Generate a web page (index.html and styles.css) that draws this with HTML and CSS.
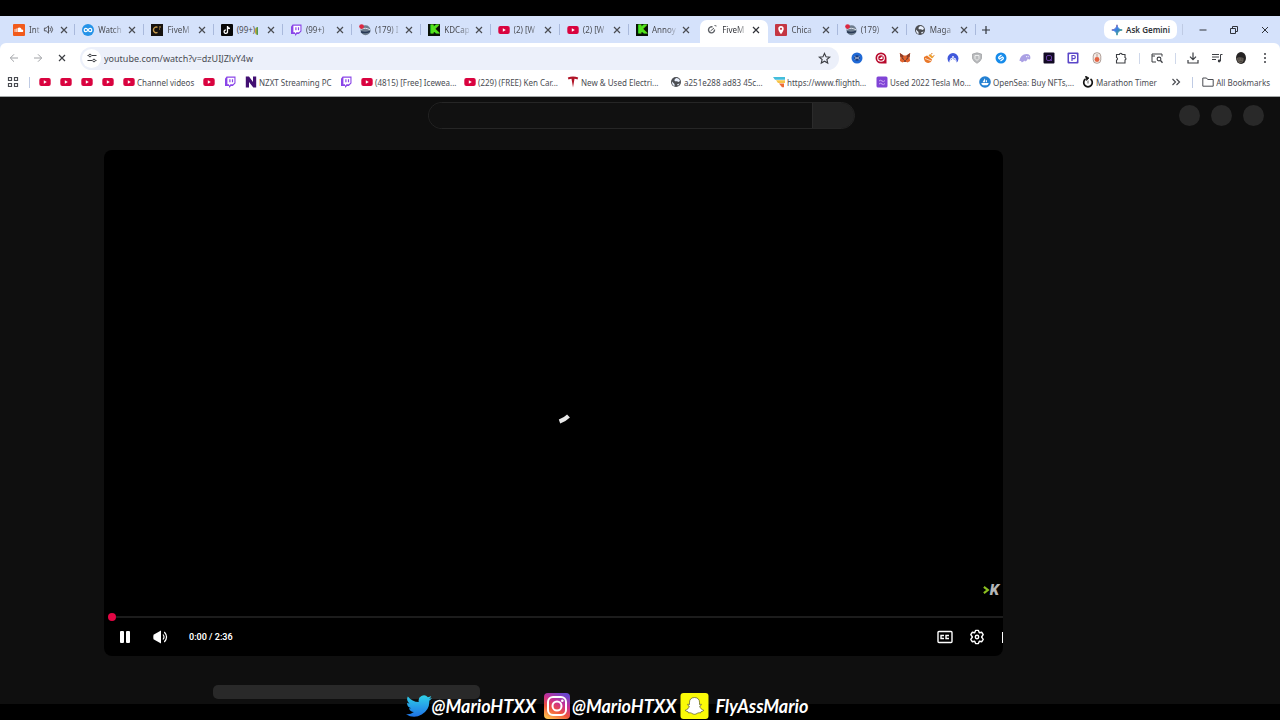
FILE: index.html
```html
<!DOCTYPE html>
<html lang="en">
<head>
<meta charset="utf-8">
<title>FiveM</title>
<link rel="stylesheet" href="styles.css">
</head>
<body>
<svg class="defs" aria-hidden="true">
  <defs>
    <linearGradient id="bird" x1="0" y1="0" x2="0" y2="1"><stop offset="0" stop-color="#2fd0e8"/><stop offset="1" stop-color="#1f74e8"/></linearGradient>
    <linearGradient id="insta" x1="0.2" y1="1" x2="0.7" y2="0"><stop offset="0" stop-color="#fdc04e"/><stop offset="0.35" stop-color="#f0543c"/><stop offset="0.65" stop-color="#c92f92"/><stop offset="1" stop-color="#6a45cf"/></linearGradient>
    <linearGradient id="spark" x1="0" y1="0" x2="1" y2="1"><stop offset="0" stop-color="#e8453c"/><stop offset="0.4" stop-color="#3b7ded"/><stop offset="1" stop-color="#35a853"/></linearGradient>
  </defs>
  <symbol id="x" viewBox="0 0 12 12"><path d="M3 3l6 6M9 3l-6 6" stroke="currentColor" stroke-width="1.2" fill="none"/></symbol>
  <symbol id="yt" viewBox="0 0 12 12"><rect x="0.3" y="2" width="11.4" height="8" rx="2" fill="#d9033f"/><path d="M4.8 4.2v3.6l3-1.8z" fill="#fff"/></symbol>
  <symbol id="twitch" viewBox="0 0 12 12"><path d="M2.6 .5h8.900v6.800L8.900 10H7L5 12V10H1V2.700z" fill="#8a45e8"/><path d="M3.400 1.700h7v5L8.900 8.300H6.500L5 9.700V8.300H3.400z" fill="#fff"/><path d="M5.900 3.300v3M8.500 3.300v3" stroke="#8a45e8" stroke-width="1.200"/></symbol>
  <symbol id="globe" viewBox="0 0 12 12"><circle cx="6" cy="6" r="5" fill="#4b4d52"/><path d="M2 5.500L4.500 8v2.200C2.800 9.500 1.900 8 2 5.500zM6 2c2.200 0 3.700 1.300 4 3L8.500 6 7 5.200H5L4.300 4zM9.700 7.500L8 9.800 7 8.200z" fill="#e8effc"/></symbol>
  <symbol id="gta" viewBox="0 0 12 12"><circle cx="6.500" cy="6.300" r="5" fill="#6d7c8d"/><path d="M2 5.300c3-1.500 6-1.300 9 .5" stroke="#dce1e9" fill="none"/><path d="M2 7.800c3 1.200 6 1 9-.4" stroke="#273855" stroke-width="1.500" fill="none"/><circle cx="2.600" cy="2.600" r="2.400" fill="#db2841"/></symbol>
</svg>

<header class="browser">
  <div class="tabstrip">
    <div class="tabs" role="tablist">
      <div class="tab"><svg viewBox="0 0 12 12"><rect width="12" height="12" rx="1" fill="#f15a1b"/><path d="M2 5v3M3.300 4.500V8" stroke="#fff" stroke-width=".8"/><path d="M4.500 8V4.200c2-1.400 3.900-.3 4 1.300C10.700 5.200 10.800 8 9.200 8z" fill="#fff"/></svg><span class="title short">Int</span><svg class="audio" viewBox="0 0 12 12"><path d="M1.500 4.500h2L6 2v8L3.500 7.500h-2z" fill="none" stroke="currentColor"/><path d="M7.500 4q1.700 2 0 4M9 2.500q3 3.500 0 7" fill="none" stroke="currentColor"/></svg><button class="close" aria-label="Close tab"><svg><use href="#x"/></svg></button></div>
      <div class="tab"><svg viewBox="0 0 12 12"><circle cx="6" cy="6" r="6" fill="#2593e8"/><path d="M6 6C4.700 3.500 2.200 4 2.200 6S4.700 8.500 6 6s3.800-2 3.800 0S7.300 8.500 6 6z" fill="none" stroke="#fff" stroke-width="1.200"/></svg><span class="title">Watch</span><button class="close" aria-label="Close tab"><svg><use href="#x"/></svg></button></div>
      <div class="tab"><svg viewBox="0 0 12 12"><rect width="12" height="12" fill="#17130f"/><path d="M6.500 3.400a2.800 2.800 0 1 0 0 5" fill="none" stroke="#c69a4c" stroke-width="1.400"/><path d="M8 3h2M8 5h1" stroke="#c69a4c"/></svg><span class="title">FiveM</span><button class="close" aria-label="Close tab"><svg><use href="#x"/></svg></button></div>
      <div class="tab"><svg viewBox="0 0 12 12"><rect width="12" height="12" rx="1" fill="#080808"/><path d="M6.500 2v5.500A1.700 1.700 0 1 1 4.800 6M6.500 2.500Q7 4.300 9 4.500" fill="none" stroke="#fff" stroke-width="1.300"/></svg><span class="title solid">(99+)<i class="rainbow"></i></span><button class="close" aria-label="Close tab"><svg><use href="#x"/></svg></button></div>
      <div class="tab"><svg><use href="#twitch"/></svg><span class="title">(99+)</span><button class="close" aria-label="Close tab"><svg><use href="#x"/></svg></button></div>
      <div class="tab"><svg><use href="#gta"/></svg><span class="title">(179) I</span><button class="close" aria-label="Close tab"><svg><use href="#x"/></svg></button></div>
      <div class="tab"><b class="kick">K</b><span class="title">KDCap</span><button class="close" aria-label="Close tab"><svg><use href="#x"/></svg></button></div>
      <div class="tab"><svg><use href="#yt"/></svg><span class="title">(2) [W</span><button class="close" aria-label="Close tab"><svg><use href="#x"/></svg></button></div>
      <div class="tab"><svg><use href="#yt"/></svg><span class="title">(2) [W</span><button class="close" aria-label="Close tab"><svg><use href="#x"/></svg></button></div>
      <div class="tab before-active"><b class="kick">K</b><span class="title">Annoy</span><button class="close" aria-label="Close tab"><svg><use href="#x"/></svg></button></div>
      <div class="tab active"><svg viewBox="0 0 12 12"><path d="M6.500 3a3 3 0 1 0 2 2.500" fill="none" stroke="#5b5e63" stroke-width="1.400"/><path d="M4.500 7L8 4M8.500 1.500l2 .5" stroke="#5b5e63"/></svg><span class="title">FiveM</span><button class="close" aria-label="Close tab"><svg><use href="#x"/></svg></button></div>
      <div class="tab"><svg viewBox="0 0 12 12"><rect width="12" height="12" rx="1" fill="#c43643"/><path d="M6 10.300C4 7.500 3.300 6.300 3.300 4.800a2.700 2.700 0 0 1 5.400 0C8.700 6.300 8 7.500 6 10.300z" fill="#fff"/><circle cx="6" cy="4.800" r="1.100" fill="#c43643"/></svg><span class="title">Chica</span><button class="close" aria-label="Close tab"><svg><use href="#x"/></svg></button></div>
      <div class="tab"><svg><use href="#gta"/></svg><span class="title">(179)</span><button class="close" aria-label="Close tab"><svg><use href="#x"/></svg></button></div>
      <div class="tab"><svg><use href="#globe"/></svg><span class="title">Maga</span><button class="close" aria-label="Close tab"><svg><use href="#x"/></svg></button></div>
    </div>
    <div class="strip-end">
      <button class="newtab" aria-label="New tab"><svg viewBox="0 0 12 12"><path d="M6 2v8M2 6h8" stroke="currentColor" stroke-width="1.200"/></svg></button>
      <button class="gemini"><svg viewBox="0 0 12 12"><path d="M6 .8Q6.500 5.500 11.200 6 6.500 6.500 6 11.200 5.500 6.500.8 6 5.500 5.500 6 .8z" fill="url(#spark)" stroke="url(#spark)"/></svg>Ask Gemini</button>
      <span class="rule"></span>
      <button class="win" aria-label="Minimize"><svg viewBox="0 0 12 12"><path d="M2.500 6h7" stroke="currentColor"/></svg></button>
      <button class="win" aria-label="Restore"><svg viewBox="0 0 12 12"><path d="M2.500 4.500h5v5h-5zM4.500 4V2.500h5v5H8" fill="none" stroke="currentColor"/></svg></button>
      <button class="win" aria-label="Close"><svg viewBox="0 0 12 12"><path d="M3 3l6 6M9 3l-6 6" stroke="currentColor"/></svg></button>
    </div>
  </div>

  <div class="toolbar">
    <button class="tool dim" aria-label="Back"><svg viewBox="0 0 12 12"><path d="M10 6H2.500M6 2.300L2.300 6 6 9.700" fill="none" stroke="currentColor"/></svg></button>
    <button class="tool dim" aria-label="Forward"><svg viewBox="0 0 12 12"><path d="M2 6h7.500M6 2.300L9.700 6 6 9.700" fill="none" stroke="currentColor"/></svg></button>
    <button class="tool" aria-label="Stop loading"><svg><use href="#x"/></svg></button>
    <div class="omnibox">
      <button class="site" aria-label="View site information"><svg viewBox="0 0 12 12"><path d="M1.500 3.500h1M6 3.500h4.500M1.500 8.500H6M9.500 8.500h1" stroke="currentColor" stroke-width="1.200"/><circle cx="4" cy="3.500" r="1.300" fill="none" stroke="currentColor"/><circle cx="8" cy="8.500" r="1.300" fill="none" stroke="currentColor"/></svg></button>
      <input class="url" type="text" aria-label="Address" value="youtube.com/watch?v=dzUIJZlvY4w">
      <button class="star" aria-label="Bookmark this tab"><svg viewBox="0 0 12 12"><path d="M6 1.300l1.400 3.100 3.400.3-2.600 2.200.8 3.300L6 8.500l-3 1.700.8-3.300L1.200 4.700l3.400-.3z" fill="none" stroke="currentColor"/></svg></button>
    </div>
    <div class="extensions">
      <button class="tool" aria-label="Crypto wallet"><svg viewBox="0 0 12 12"><circle cx="6" cy="6" r="5.500" fill="#2069d5"/><circle cx="6" cy="6" r="2.700" fill="#193d83"/><path d="M4 4.500L5.500 6 4 7.500M8 4.500L6.500 6 8 7.500" stroke="#fff" fill="none" stroke-width=".9"/></svg></button>
      <button class="tool" aria-label="Quidd"><svg viewBox="0 0 12 12"><path d="M6 .5a5.500 5.500 0 1 0 0 11h5.500V6A5.500 5.500 0 0 0 6 .5z" fill="#b8092c"/><circle cx="6" cy="6" r="3.300" fill="none" stroke="#fff" stroke-width="1.100"/><path d="M4 7l3.500-3v3" fill="#fff"/></svg></button>
      <button class="tool" aria-label="MetaMask"><svg viewBox="0 0 12 12"><path d="M.8 1l3.700 2.500h3L11.200 1l-.6 5 .5 3-2.500 1.500L7.500 10h-3l-1.100.5L.9 9l.5-3z" fill="#e2632d"/><path d="M.8 1l3.700 2.500L4 6 1.400 5zM11.200 1L7.500 3.500 8 6l2.600-1z" fill="#8d3e29"/><path d="M3.300 6.500l1.500.8M8.700 6.500l-1.500.8M5 9h2" stroke="#302a3a"/></svg></button>
      <button class="tool" aria-label="Compass"><svg viewBox="0 0 12 12"><path d="M1 5l3-1.500L9 7.500A4 4 0 0 1 2 9.500 5 5 0 0 1 1 5z" fill="#e9782a"/><path d="M2 6.500l6 2.300" stroke="#fff" stroke-width=".7"/><path d="M5.500 3.500l3.500 3 1.500-1.500L7 2z" fill="#eda02c"/><path d="M8.200 2.500l1-1.500M9.800 4.500l1.600-1" stroke="#d77123" fill="none"/></svg></button>
      <button class="tool" aria-label="NordVPN"><svg viewBox="0 0 12 12"><path d="M2.200 10.500A5.500 5.500 0 1 1 9.800 10.500L7.800 7 7 8 6 5.500 4.500 8 4 7z" fill="#4058db"/><path d="M2.500 9.500L4.200 6l.6.900L6 4l1.300 2.800L8 6l1.500 3.500" stroke="#fff" fill="none" stroke-width=".8"/></svg></button>
      <button class="tool" aria-label="Shield"><svg viewBox="0 0 12 12"><path d="M6 .8l4.500 1.300v4.400Q9.500 9.500 6 11.300 2.500 9.500 1.500 6.500V2.100z" fill="#b9bbbd" stroke="#999b9d" stroke-width=".7"/><path d="M4 3.500h4v3L6 8.500 4 6.500z" fill="none" stroke="#eee"/></svg></button>
      <button class="tool" aria-label="Shazam"><svg viewBox="0 0 12 12"><circle cx="6" cy="6" r="5.500" fill="#168bea"/><path d="M6.500 3L4.200 4.700Q3 6 4.500 7L6 6M5.500 9l2.300-1.700Q9 6 7.500 5L6 6" stroke="#fff" stroke-width="1.300" fill="none"/></svg></button>
      <button class="tool" aria-label="Phantom"><svg viewBox="0 0 12 12"><path d="M.5 9C1 5 3.500 2 7.500 2c3 0 4.300 2 3.800 4.500-.2 1.500-2 1-2.500 0C8 9 6 10.300 5.300 8.500 4 10.800 2 10.600 2.200 9z" fill="#aaa0e4"/><path d="M7.500 4v1.200M9.200 4v1.200" stroke="#fff" stroke-width=".8"/></svg></button>
      <button class="tool" aria-label="Quick search"><svg viewBox="0 0 12 12"><rect x=".5" y=".5" width="11" height="11" rx="1" fill="#120a24"/><rect x="3.500" y="3.500" width="5" height="5" rx="1.500" fill="none" stroke="#663ca2"/><path d="M7 7l2 2" stroke="#663ca2"/></svg></button>
      <button class="tool" aria-label="Pretzel"><svg viewBox="0 0 12 12"><rect x=".5" y=".5" width="11" height="11" rx="1" fill="#5a46c8"/><rect x="2" y="2" width="8" height="8" rx="1" fill="#fff"/><path d="M5 9V3.500h1.700a1.500 1.500 0 0 1 0 3.200H5" fill="none" stroke="#5a46c8" stroke-width="1.200"/></svg></button>
      <button class="tool" aria-label="Recorder"><svg viewBox="0 0 12 12"><rect x="2.200" y=".7" width="7.600" height="10.600" rx="3.500" fill="#f4e9e4" stroke="#8f7b72" stroke-width=".7"/><circle cx="6" cy="7.500" r="2.400" fill="#e46342"/><path d="M6 2v3" stroke="#b69c91"/></svg></button>
      <button class="tool" aria-label="Extensions"><svg viewBox="0 0 12 12"><path d="M1.500 2.500H4.500a1.300 1.300 0 0 1 2.600 0H10v3a1.300 1.300 0 0 1 0 2.500v3H1.500V8.200a1.400 1.400 0 0 0 0-2.700z" fill="none" stroke="currentColor" stroke-width="1.100"/></svg></button>
      <span class="sep"></span>
      <button class="tool" aria-label="Search tab"><svg viewBox="0 0 12 12"><path d="M5 10H1V2h10v2.500M1 4h3" fill="none" stroke="currentColor"/><circle cx="8" cy="7" r="1.900" fill="none" stroke="currentColor" stroke-width="1.100"/><path d="M9.500 8.500l2 2.300" stroke="currentColor" stroke-width="1.300"/></svg></button>
      <span class="sep"></span>
      <button class="tool" aria-label="Downloads"><svg viewBox="0 0 12 12"><path d="M6 .5v7M3 4.700l3 3 3-3M1 8v3h10V8" fill="none" stroke="currentColor" stroke-width="1.200"/></svg></button>
      <button class="tool" aria-label="Media controls"><svg viewBox="0 0 12 12"><path d="M1 2.500h7M1 5h7M1 7.500h4M9.500 9V2.500h2" fill="none" stroke="currentColor"/><circle cx="8.200" cy="9" r="1.400" fill="currentColor"/></svg></button>
      <button class="tool" aria-label="Profile"><svg viewBox="0 0 12 12"><ellipse cx="6" cy="6" rx="5" ry="6" fill="#252323"/><path d="M1.500 6q3-1.500 7 0V9Q6 13 3 10z" fill="#625c55"/><path d="M3 7h1.500M6 7h1.500M4.500 9.500H7" stroke="#403a36" stroke-width=".8"/></svg></button>
      <button class="tool" aria-label="Menu"><svg viewBox="0 0 12 12" fill="currentColor"><circle cx="6" cy="2" r="1"/><circle cx="6" cy="6" r="1"/><circle cx="6" cy="10" r="1"/></svg></button>
    </div>
  </div>

  <nav class="bookmarks" aria-label="Bookmarks">
    <button class="apps" aria-label="Apps"><svg viewBox="0 0 12 12" fill="none" stroke="currentColor" stroke-width="1.200"><path d="M1.500 1.500h3v3h-3zM7.500 1.500h3v3h-3zM1.500 7.500h3v3h-3zM7.500 7.500h3v3h-3z"/></svg></button>
    <span class="rule"></span>
    <a href="#" aria-label="YouTube"><svg><use href="#yt"/></svg></a>
    <a href="#" aria-label="YouTube"><svg><use href="#yt"/></svg></a>
    <a href="#" aria-label="YouTube"><svg><use href="#yt"/></svg></a>
    <a href="#" aria-label="YouTube"><svg><use href="#yt"/></svg></a>
    <a href="#" class="w-channel"><svg><use href="#yt"/></svg>Channel videos</a>
    <a href="#" aria-label="YouTube"><svg><use href="#yt"/></svg></a>
    <a href="#" aria-label="Twitch"><svg><use href="#twitch"/></svg></a>
    <a href="#" class="w-nzxt"><svg viewBox="0 0 12 12"><path d="M.8 11.500V.5H4l4 5.500V.5h3.200v11H8.300L4 6V11.500z" fill="#420f72"/></svg>NZXT Streaming PC</a>
    <a href="#" aria-label="Twitch"><svg><use href="#twitch"/></svg></a>
    <a href="#" class="wide"><svg><use href="#yt"/></svg>(4815) [Free] Icewea...</a>
    <a href="#" class="wide"><svg><use href="#yt"/></svg>(229) (FREE) Ken Car...</a>
    <a href="#" class="wide"><svg viewBox="0 0 12 12"><path d="M.8 1.500q5.200-2.200 10.400 0l-.7 2Q9 2.800 7.500 2.800L6 11.500 4.500 2.800Q3 2.800 1.500 3.500z" fill="#b01326"/></svg>New &amp; Used Electri...</a>
    <a href="#" class="wide"><svg><use href="#globe"/></svg>a251e288 ad83 45c...</a>
    <a href="#" class="wide"><svg viewBox="0 0 12 12"><path d="M0 1h12v2.800H2z" fill="#43bddb"/><path d="M3 4.300h9v2.800H5z" fill="#f6c447"/><path d="M6 7.600h5v3.600H9z" fill="#ed6b35"/></svg>https://www.flighth...</a>
    <a href="#" class="wide"><svg viewBox="0 0 12 12"><rect x=".5" y=".5" width="11" height="11" rx="1.500" fill="#8044d6"/><path d="M3 5q1.500-1.500 3 0t3-.5M3 8q1.500-1.500 3 0t3-.5" stroke="#cda8f5" fill="none"/></svg>Used 2022 Tesla Mo...</a>
    <a href="#" class="wide"><svg viewBox="0 0 12 12"><circle cx="6" cy="6" r="5.800" fill="#2380d2"/><path d="M6 2.200v4H3.500zM6.800 3.500q2 1.300 1 2.800h-1zM2.300 7h7.500Q9 9.300 7.800 9.300H4Q2.500 9 2.300 7z" fill="#fff"/></svg>OpenSea: Buy NFTs,...</a>
    <a href="#"><svg viewBox="0 0 12 12"><path d="M3.500 3A4.300 4.300 0 1 0 8.500 3" fill="none" stroke="#151515" stroke-width="1.700"/><path d="M3.500 0l3.500 2-2.500 2.500zM6 4.500v3" fill="#151515" stroke="#151515" stroke-width=".7"/></svg>Marathon Timer</a>
    <div class="bookmark-end">
      <button class="more" aria-label="More bookmarks"><svg viewBox="0 0 12 12"><path d="M2.500 3l3 3-3 3M6.500 3l3 3-3 3" fill="none" stroke="currentColor" stroke-width="1.200"/></svg></button>
      <span class="rule"></span>
      <a href="#"><svg viewBox="0 0 12 12"><path d="M.8 2h3.700l1.200 1.500h5.500v6.700H.8z" fill="none" stroke="currentColor"/></svg>All Bookmarks</a>
    </div>
  </nav>
</header>

<main class="page">
  <div class="masthead">
    <form class="search"><input type="text" aria-label="Search"><button type="button" aria-label="Search"></button></form>
    <div class="circles"><span></span><span></span><span></span></div>
  </div>
  <section class="player" aria-label="Video player">
    <svg class="spinner" viewBox="0 0 12 10"><path d="M1.500 7.500Q7 5.500 10.500 2" fill="none" stroke="#e8e8e8" stroke-width="4"/></svg>
    <div class="mark"><svg viewBox="0 0 8 12"><path d="M1 2.500L5.500 6 1 9.500" fill="none" stroke="#8bbf20" stroke-width="2.500"/></svg><span>K</span></div>
    <div class="controls">
      <input class="seek" type="range" min="0" max="156" value="0" aria-label="Seek">
      <div class="buttons">
        <button class="pause" aria-label="Pause"><svg viewBox="0 0 16 16" fill="#fff"><rect x="3" y="2" width="4" height="12" rx="1"/><rect x="9" y="2" width="4" height="12" rx="1"/></svg></button>
        <button class="volume" aria-label="Mute"><svg viewBox="0 0 16 16"><path d="M.5 5.800L8 1.500v13L.5 10.200Q0 8 .5 5.800z" fill="#fff"/><path d="M10 5.500q2 2.500 0 5M11.300 3q4.500 5 0 10" fill="none" stroke="#fff" stroke-width="1.200"/></svg></button>
        <span class="time">0:00 / 2:36</span>
        <button class="cc" aria-label="Subtitles"><svg viewBox="0 0 16 16" fill="none" stroke="#fff"><rect x="1" y="2.500" width="14" height="11" rx="1" stroke-width="1.400"/><path d="M7 6.500H4v3h3M12 6.500H9v3h3" stroke-width="1.400"/></svg></button>
        <button class="gear" aria-label="Settings"><svg viewBox="0 0 16 16" fill="none" stroke="#fff" stroke-width="1.400"><path d="M6.600 1.400h2.800l.9 2.300 2.500-.4 1.400 2.400L12.600 8l1.600 2.300-1.400 2.400-2.500-.4-.9 2.300H6.600l-.9-2.300-2.500.4-1.400-2.400L3.400 8 1.800 5.700l1.400-2.400 2.500.4z" stroke-linejoin="round"/><circle cx="8" cy="8" r="1.700"/></svg></button>
        <button class="edge" aria-label="Theater mode"></button>
      </div>
    </div>
  </section>
  <div class="skeleton"></div>
</main>
<footer class="letterbox"></footer>

<div class="socials">
  <svg class="bird" viewBox="0 0 24 24"><path d="M24 4.600a10 10 0 0 1-2.800.8 5 5 0 0 0 2.100-2.700 10 10 0 0 1-3.100 1.200 4.900 4.900 0 0 0-8.400 4.500A14 14 0 0 1 1.700 3.200a4.900 4.900 0 0 0 1.500 6.500 4.900 4.900 0 0 1-2.200-.6 4.900 4.900 0 0 0 3.900 4.900 5 5 0 0 1-2.200.1 4.900 4.900 0 0 0 4.600 3.400A9.900 9.900 0 0 1 0 19.500a14 14 0 0 0 21.500-12.400A10 10 0 0 0 24 4.600z" fill="url(#bird)"/></svg>
  <span class="handle">@MarioHTXX</span>
  <svg class="insta" viewBox="0 0 26 26"><rect width="26" height="26" rx="4" fill="url(#insta)"/><g fill="none" stroke="#fff" stroke-width="2"><rect x="4" y="4" width="18" height="18" rx="5"/><circle cx="13" cy="13" r="4.500"/></g><circle cx="18.300" cy="7.700" r="1.300" fill="#fff"/></svg>
  <span class="handle">@MarioHTXX</span>
  <svg class="snap" viewBox="0 0 28 26"><rect width="28" height="26" rx="3" fill="#fbfb08"/><path d="M14 4.500c3.500 0 5 2.300 5 4.700v2.300l1.800-.3c.5.900-.5 1.400-1.600 1.900.5 2.300 2 3.500 4 4.100-.2 1-1.500 1.200-2.700 1.500l-.5 1.200c-1.300-.2-2.500-.2-3.400.5-1.600 1.200-3.600 1.200-5.200 0-.9-.7-2.100-.7-3.400-.5l-.5-1.200c-1.200-.3-2.500-.5-2.700-1.500 2-.6 3.500-1.800 4-4.100-1.100-.5-2.100-1-1.600-1.900l1.800.3V9.200c0-2.400 1.500-4.700 5-4.700z" fill="#fff" stroke="#55551c" stroke-width=".7"/></svg>
  <span class="handle">FlyAssMario</span>
</div>
</body>
</html>
```
FILE: styles.css
```css
* { box-sizing: border-box; }
body {
  margin: 0;
  min-height: 100vh;
  display: flex;
  flex-direction: column;
  position: relative;
  overflow-x: hidden;
  background: #000;
  font-family: "Noto Sans", "Open Sans", sans-serif;
  font-size: 8px;
  color: #4a4c52;
}
button, input { font: inherit; color: inherit; border: 0; padding: 0; margin: 0; background: none; }
button { display: flex; align-items: center; justify-content: center; flex: none; }
svg { display: block; flex: none; width: 12px; height: 12px; }
a { color: inherit; text-decoration: none; }
.defs { position: absolute; width: 0; height: 0; }

.browser { border-top: 16px solid #000; background: #d5e2fb; }
.tabstrip { display: flex; align-items: center; height: 27px; padding-left: 6px; }
.tabs { display: flex; flex: 1; min-width: 0; align-self: stretch; padding-top: 4px; }
.tab { flex: 1 1 0; min-width: 0; display: flex; align-items: center; gap: 4px; padding: 0 6px 0 7px; position: relative; margin-bottom: 4px; }
.tab::after { content: ""; position: absolute; right: 0; top: 4px; width: 1px; height: 11px; background: #a9b9dc; }
.tab.before-active::after, .tab.active::after { display: none; }
.tab.active { background: #fff; border-radius: 7px 7px 0 0; margin: 0 0 0 2px; padding: 0 6px 4px; color: #303238; }
.title { flex: 1; min-width: 0; white-space: nowrap; mask-image: linear-gradient(to right, #000 60%, rgba(0, 0, 0, 0.2)); }
.title.solid { mask-image: none; }
.title.short { flex: none; }
.audio { width: 11px; height: 11px; margin: 0 auto 0 -1px; }
.rainbow { display: inline-block; width: 3px; height: 8px; border-radius: 3px 0 0 3px; background: linear-gradient(to right, #e5a92d, #329458); vertical-align: middle; }
.kick { flex: none; width: 12px; height: 12px; background: #091206; color: #53e51d; font: 900 11px/12px "DejaVu Sans", sans-serif; text-align: center; -webkit-text-stroke: 1px #53e51d; }
.strip-end { width: 304px; display: flex; align-items: center; color: #30343b; }
.newtab { width: 20px; }
.gemini { margin-left: auto; width: 73px; height: 19px; gap: 3px; border-radius: 7px; background: #fff; font-weight: 600; white-space: nowrap; }
.rule { flex: none; width: 1px; height: 11px; background: #bfcbe4; }
.strip-end .rule { margin: 0 4px 0 5px; }
.win { width: 31px; }

.toolbar { display: flex; align-items: center; height: 30px; padding: 0 3px 0 2px; background: #fff; color: #3c3e43; border-radius: 6px 6px 0 0; }
.tool { width: 24px; height: 24px; }
.dim { color: #a0a2a6; }
.omnibox { flex: 1; min-width: 0; display: flex; align-items: center; height: 23px; margin: 0 6px; padding: 0 8px 0 2px; border-radius: 12px; background: #ecf0fa; }
.site { width: 19px; height: 19px; border-radius: 50%; background: #fff; }
.url { flex: 1; min-width: 0; margin-left: 3px; font-size: 9px; color: #4a4d53; }
.star svg { width: 13px; height: 13px; }
.extensions { display: flex; align-items: center; }
.sep { width: 12px; height: 11px; background: linear-gradient(#cfd8ea, #cfd8ea) center / 1px 100% no-repeat; }

.bookmarks { display: flex; align-items: center; gap: 10px; height: 24px; padding: 0 10px 5px 7px; background: #fff; border-bottom: 1px solid #a4a8a8; white-space: nowrap; }
.bookmarks .rule { margin-right: -1px; }
.bookmarks a { display: flex; align-items: center; gap: 3px; flex: none; }
.bookmarks a svg { margin-right: -1px; }
.bookmarks .w-channel { width: 70px; }
.bookmarks .w-nzxt { width: 85px; }
.bookmarks .wide { width: 93px; }
.bookmark-end { display: flex; align-items: center; gap: 10px; margin-left: auto; }

.page { flex: 1; background: #0f0f0f; }
.masthead { display: grid; grid-template-columns: 1fr 427px 1fr; align-items: center; height: 37px; padding: 0 16px 0 19px; }
.search { grid-column: 2; display: flex; height: 27px; border: 1px solid #262626; border-radius: 14px; overflow: hidden; }
.search input { flex: 1; min-width: 0; background: #111; font-size: 12px; padding: 0 14px; color: #fff; }
.search button { width: 42px; background: #222; border-left: 1px solid #2b2b2b; }
.circles { display: flex; justify-content: flex-end; gap: 11px; }
.circles span { width: 21px; height: 21px; border-radius: 50%; background: #292929; }
.player { position: relative; margin: 16px 277px 0 104px; aspect-ratio: 16 / 9; display: flex; flex-direction: column; border-radius: 8px; background: #000; overflow: hidden; }
.spinner { position: absolute; left: calc(50% + 4px); top: calc(50% + 11px); width: 12px; height: 10px; }
.mark { margin: auto 4px 15px auto; display: flex; align-items: center; color: #b4b6b7; }
.mark svg { width: 7px; height: 12px; }
.mark span { font: italic 900 15px/12px Roboto, sans-serif; }
.controls { color: #fff; }
.seek { display: block; appearance: none; width: calc(100% - 4px); height: 12px; margin-left: 4px; background: linear-gradient(#1c1c1c, #1c1c1c) center / 100% 2px no-repeat; }
.seek::-webkit-slider-thumb { appearance: none; width: 8px; height: 8px; border-radius: 50%; background: #e20644; }
.buttons { display: flex; align-items: center; height: 33px; padding: 0 0 4px 13px; }
.buttons svg { width: 16px; height: 16px; }
.volume { margin-left: 20px; }
.time { margin: 0 auto 0 20px; font: 600 9px/14px Roboto, sans-serif; }
.gear { margin: 0 17px 0 16px; }
.edge { width: 1px; height: 11px; background: #fff; }
.skeleton { width: 267px; height: 14px; margin: 29px 0 5px 213px; border-radius: 5px; background: #292929; }
.letterbox { height: 16px; }

.socials { position: absolute; left: 0; right: 0; bottom: 1px; display: flex; align-items: center; justify-content: center; padding-right: 66px; color: #fff; }
.handle { font: italic 700 18px/24px Lato, sans-serif; }
.bird { width: 26px; height: 26px; }
.insta { width: 26px; height: 26px; margin: 0 2px 0 8px; }
.snap { width: 29px; height: 26px; margin: 0 6px 0 4px; }
```
